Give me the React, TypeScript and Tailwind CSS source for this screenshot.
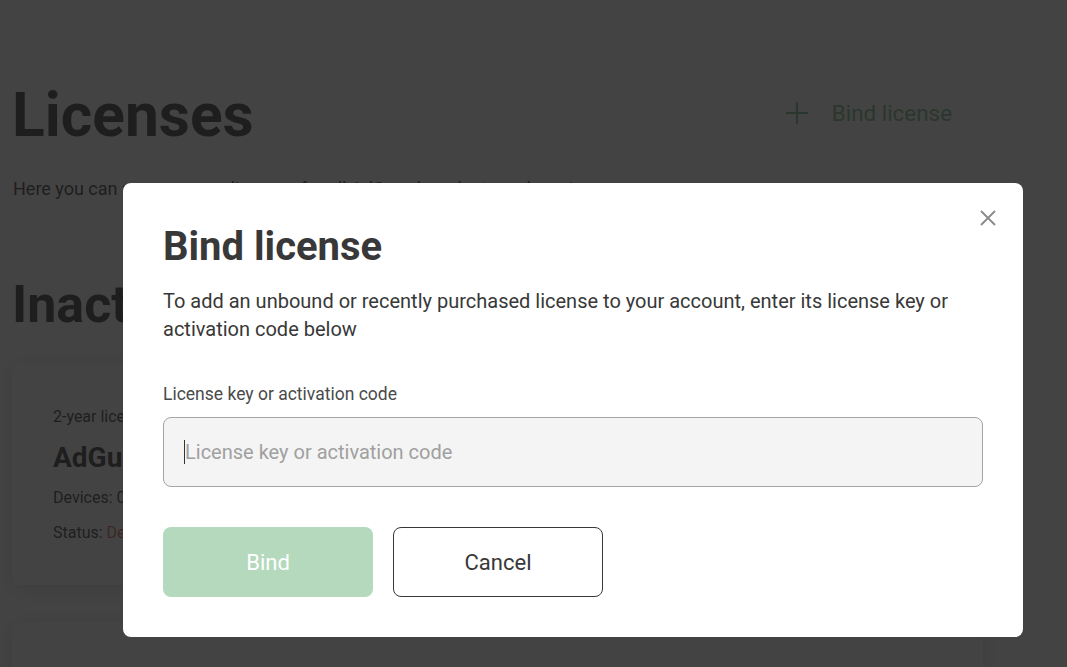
import React from "react";

export default function App() {
  return (
    <div
      className="relative w-[1067px] h-[667px] overflow-hidden bg-white"
      style={{ fontFamily: "Roboto, 'Noto Sans', sans-serif" }}
    >
      {/* Page underneath */}
      <div className="pl-[12px] w-[983px]">
        <div className="flex items-start justify-between pt-[86px]">
          <h1 className="text-[60.5px] leading-none font-bold text-[#1a1a1a]">Licenses</h1>
          <button className="mt-[15px] flex items-center gap-[24px] pr-[31px] text-[22.4px] leading-[24px] text-[#67b279]">
            <svg width="22" height="22" viewBox="0 0 22 22" fill="none" stroke="#67b279" strokeWidth="2">
              <path d="M11 0v22M0 11h22" />
            </svg>
            Bind license
          </button>
        </div>
        <p className="mt-[28px] text-[18px] leading-[28px] text-[#1a1a1a] pl-[1px]">
          Here you can manage your licenses for all AdGuard products and services
        </p>
        <h2 className="mt-[76px] text-[52px] leading-none font-bold text-[#1a1a1a]">Inactive licenses</h2>
        <div className="mt-[32px] rounded-[8px] bg-white shadow-[0_4px_24px_rgba(0,0,0,0.18)] px-[41px] pt-[42px] pb-[40px]">
          <div className="text-[16px] leading-[24px] text-[#1a1a1a]">
            2-year license <span className="text-[#c88a2c]">· Expired</span>
          </div>
          <div className="mt-[11px] text-[28px] leading-[36px] font-bold text-[#1a1a1a]">AdGuard for Windows</div>
          <div className="mt-[10px] text-[16px] leading-[24px] text-[#1a1a1a]">Devices: 0/3</div>
          <div className="mt-[11px] text-[16px] leading-[24px] text-[#1a1a1a]">
            Status: <span className="text-[#d9503f]">Deactivated</span>
          </div>
        </div>
        <div className="mt-[37px] h-[200px] rounded-[8px] bg-white shadow-[0_4px_24px_rgba(0,0,0,0.18)]" />
      </div>

      {/* Overlay */}
      <div className="absolute inset-0 bg-[rgba(31,31,31,0.84)] pl-[123px] pt-[183px]">
        <div className="relative w-[900px] rounded-[8px] bg-white p-[40px]">
          <button className="absolute right-[27px] top-[27px] w-[16px] h-[16px] flex items-center justify-center">
            <svg width="16" height="16" viewBox="0 0 16 16" fill="none" stroke="#8a8a8a" strokeWidth="1.8">
              <path d="M1 1l14 14M15 1L1 15" />
            </svg>
          </button>
          <h3 className="text-[40px] leading-[48px] font-bold text-[#383838]">Bind license</h3>
          <p className="mt-[16px] text-[20px] leading-[28px] text-[#383838] pr-[20px]">
            To add an unbound or recently purchased license to your account, enter its license key or activation code below
          </p>
          <label className="block mt-[39px] text-[17.5px] leading-[24px] text-[#4a4a4a]">
            License key or activation code
          </label>
          <div className="relative mt-[11px]">
            <input
              className="block w-full h-[70px] rounded-[8px] border border-[#a4a4a4] bg-[#f4f4f4] px-[21px] text-[20px] text-[#383838] placeholder:text-[#a0a0a0] outline-none"
              placeholder="License key or activation code"
            />
            <span className="absolute left-[21px] top-[23px] w-[1px] h-[24px] bg-[#333]" />
          </div>
          <div className="mt-[40px] flex gap-[20px]">
            <button className="w-[210px] h-[70px] rounded-[8px] bg-[#b4d9bd] text-[22px] text-white">Bind</button>
            <button className="w-[210px] h-[70px] rounded-[8px] border border-[#383838] bg-white text-[22px] text-[#383838]">
              Cancel
            </button>
          </div>
        </div>
      </div>
    </div>
  );
}
